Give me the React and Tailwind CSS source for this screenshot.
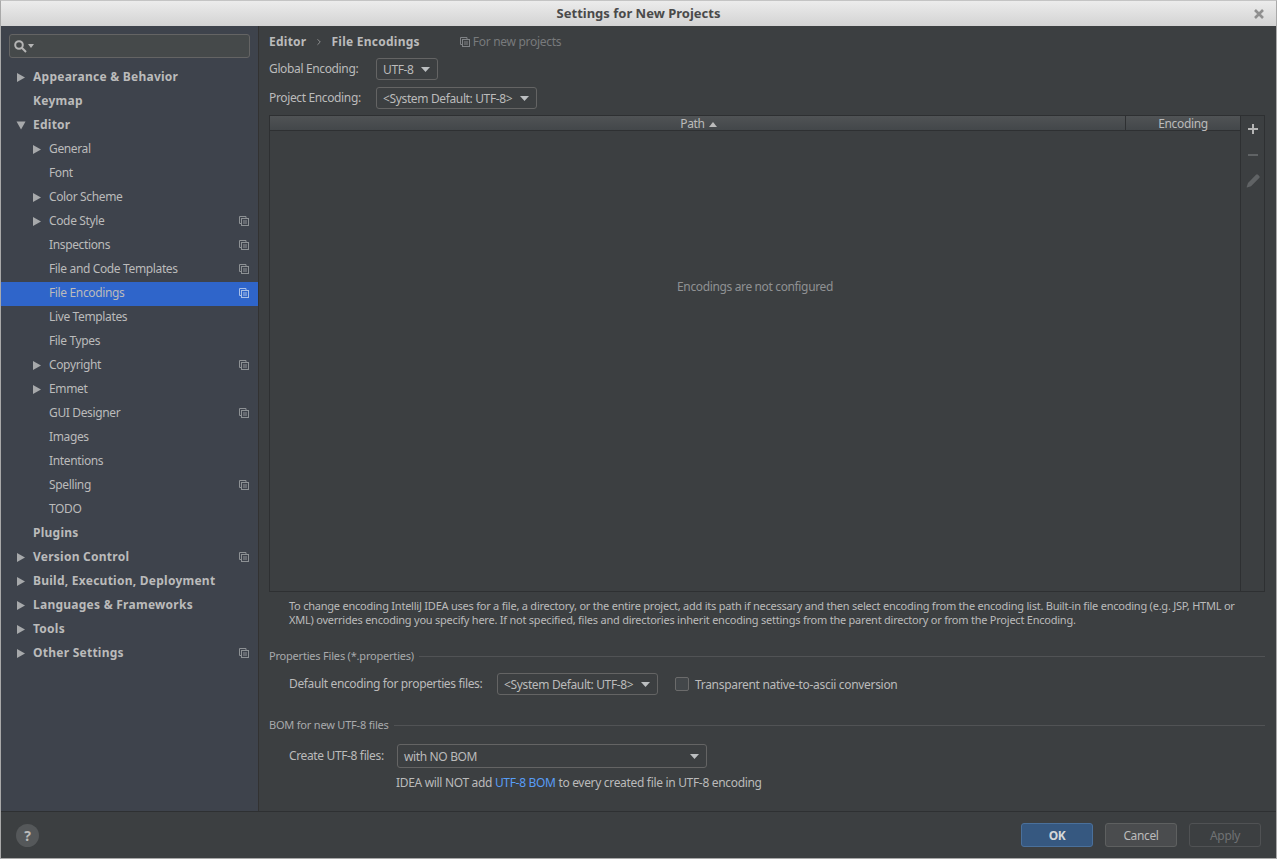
import { ChevronRight } from 'lucide-react';

const treeItems = [
  { label: 'Appearance & Behavior', level: 0, arrow: 'right' },
  { label: 'Keymap', level: 0 },
  { label: 'Editor', level: 0, arrow: 'down' },
  { label: 'General', level: 1, arrow: 'right' },
  { label: 'Font', level: 1 },
  { label: 'Color Scheme', level: 1, arrow: 'right' },
  { label: 'Code Style', level: 1, arrow: 'right', copy: true },
  { label: 'Inspections', level: 1, copy: true },
  { label: 'File and Code Templates', level: 1, copy: true },
  { label: 'File Encodings', level: 1, copy: true, selected: true },
  { label: 'Live Templates', level: 1 },
  { label: 'File Types', level: 1 },
  { label: 'Copyright', level: 1, arrow: 'right', copy: true },
  { label: 'Emmet', level: 1, arrow: 'right' },
  { label: 'GUI Designer', level: 1, copy: true },
  { label: 'Images', level: 1 },
  { label: 'Intentions', level: 1 },
  { label: 'Spelling', level: 1, copy: true },
  { label: 'TODO', level: 1 },
  { label: 'Plugins', level: 0 },
  { label: 'Version Control', level: 0, arrow: 'right', copy: true },
  { label: 'Build, Execution, Deployment', level: 0, arrow: 'right' },
  { label: 'Languages & Frameworks', level: 0, arrow: 'right' },
  { label: 'Tools', level: 0, arrow: 'right' },
  { label: 'Other Settings', level: 0, arrow: 'right', copy: true },
];

const CopyIcon = ({ className = 'text-[#8d9194]' }) => (
  <svg width="10" height="10" viewBox="0 0 10 10" fill="none" stroke="currentColor" className={className}>
    <path d="M2.5 7.5H.5V.5h6.5v2" />
    <rect x="2.5" y="2.5" width="7" height="7" />
    <path d="M4 5h4M4 7h4" />
  </svg>
);

const Arrow = ({ dir }) => (
  <svg width="10" height="11" viewBox="0 0 10 11" className="text-[#a7a9ab]" fill="currentColor">
    {dir === 'right' ? <path d="M1 1l8 4.5L1 10z" /> : <path d="M.5 1.5h9L5 9.5z" />}
  </svg>
);

const Caret = () => (
  <svg width="9" height="5" viewBox="0 0 9 5" className="text-[#bcbfc1] shrink-0" fill="currentColor">
    <path d="M0 0h9L4.5 5z" />
  </svg>
);

const TreeRow = ({ item }) => (
  <div className={`flex items-center h-6 pb-[2px] pr-[9px] ${item.selected ? 'bg-[#2f65ca]' : ''}`}>
    <div className={`flex items-center justify-center w-[10px] shrink-0 mr-[7px] ${item.level === 0 ? 'ml-[15px]' : 'ml-[31px]'}`}>
      {item.arrow && <Arrow dir={item.arrow} />}
    </div>
    <span className={item.level === 0 ? 'font-bold text-[12px] tracking-[0.25px]' : 'text-[12px]'}>
      {item.label}
    </span>
    {item.copy && (
      <span className="ml-auto">
        <CopyIcon className={item.selected ? 'text-[#a9bfe6]' : 'text-[#8d9194]'} />
      </span>
    )}
  </div>
);

const Select = ({ children, className = '' }) => (
  <div className={`flex items-center justify-between whitespace-nowrap rounded-[3px] border border-[#646464] bg-[#3c3f41] pl-[6px] pr-[7px] text-[12px] ${className}`}>
    <span className="pt-px">{children}</span>
    <Caret />
  </div>
);

const GroupTitle = ({ children }) => (
  <div className="flex items-center gap-[5px] text-[11px] leading-4 tracking-[-0.2px] text-[#a8aaac]">
    <span>{children}</span>
    <div className="h-px flex-1 bg-[#515355]" />
  </div>
);

const FooterButton = ({ children, className }) => (
  <div className={`flex h-6 w-[72px] items-center justify-center rounded-[3px] border pt-px text-[12px] ${className}`}>{children}</div>
);

export default function App() {
  return (
    <div className="flex h-[859px] w-[1277px] flex-col overflow-hidden border border-[#a9a9a9] border-t-[#c4c4c4] bg-[#3c3f41] font-['Noto_Sans','Open_Sans',sans-serif] tracking-[-0.36px] text-[#bbbbbb]">
      <div className="relative flex h-[25px] shrink-0 items-center justify-center bg-gradient-to-b from-[#ececec] to-[#d3d3d3]">
        <span className="text-[13px] font-bold tracking-normal text-[#4a4a4a]">Settings for New Projects</span>
        <svg width="10" height="10" viewBox="0 0 10 10" className="absolute right-[12px] top-[8px] text-[#8f8f8f]" stroke="currentColor" strokeWidth="2.6">
          <path d="M1 1l8 8M9 1l-8 8" />
        </svg>
      </div>

      <div className="flex min-h-0 flex-1">
        <aside className="w-[258px] shrink-0 border-r border-[#323232] bg-[#3e434c] pt-2">
          <div className="mx-2 mb-[8px] flex h-6 items-center gap-px rounded-[3px] border border-[#646464] bg-[#45494a] pl-1">
            <svg width="13" height="13" viewBox="0 0 13 13" fill="none" stroke="#b5b5b5" strokeWidth="2">
              <circle cx="5" cy="5" r="3.8" />
              <path d="M7.8 7.8L12 12" />
            </svg>
            <svg width="6" height="4" viewBox="0 0 6 4" className="text-[#b5b5b5]" fill="currentColor"><path d="M0 0h6L3 4z" /></svg>
          </div>
          {treeItems.map((item) => (
            <TreeRow key={item.label} item={item} />
          ))}
        </aside>

        <main className="flex min-w-0 flex-1 flex-col pl-[10px] pr-[11px]">
          <div className="flex h-[32px] shrink-0 items-center text-[12px]">
            <span className="font-bold tracking-[0.25px]">Editor</span>
            <ChevronRight size={10} strokeWidth={1.5} className="ml-[8px] mr-[7px]" />
            <span className="font-bold tracking-[0.25px]">File Encodings</span>
            <CopyIcon className="ml-[40px] text-[#808386]" />
            <span className="ml-[3px] tracking-[-0.3px] text-[#787a7c]">For new projects</span>
          </div>

          <div className="flex h-[22px] items-center text-[12px]">
            <span className="w-[107px]">Global Encoding:</span>
            <Select className="h-[22px] w-[62px]">UTF-8</Select>
          </div>
          <div className="mt-[7px] flex h-[22px] items-center text-[12px]">
            <span className="w-[107px]">Project Encoding:</span>
            <Select className="h-[22px] w-[161px]">{'<System Default: UTF-8>'}</Select>
          </div>

          <div className="mt-[6px] flex h-[477px] shrink-0 border border-[#2e3032]">
            <div className="flex min-w-0 flex-1 flex-col">
              <div className="flex h-[15px] shrink-0 items-center border-b border-[#2e3032] bg-gradient-to-b from-[#505355] to-[#43474a] text-[12px]">
                <div className="flex flex-1 items-center justify-center gap-[4px] pl-[2px] pt-[2px]">
                  Path
                  <svg width="8" height="5" viewBox="0 0 8 5" fill="currentColor"><path d="M4 0l4 5H0z" /></svg>
                </div>
                <div className="h-full w-[115px] border-l border-[#2e3032] text-center leading-[16px]">Encoding</div>
              </div>
              <div className="flex flex-1 justify-center pt-[147px] text-[12px] text-[#8f9193]">Encodings are not configured</div>
            </div>
            <div className="flex w-[24px] shrink-0 flex-col items-center gap-[14px] border-l border-[#2e3032] pt-[7px]">
              <svg width="12" height="12" viewBox="0 0 12 12" fill="#b5b5b5"><path d="M5 1h2v4h4v2H7v4H5V7H1V5h4z" /></svg>
              <svg width="12" height="12" viewBox="0 0 12 12" fill="#606365"><path d="M1 5h10v2H1z" /></svg>
              <svg width="14" height="14" viewBox="0 0 14 14" fill="#606365" className="-mt-px">
                <path d="M10 .8a1.4 1.4 0 0 1 2 0l1.2 1.2a1.4 1.4 0 0 1 0 2L5 12.2 1 13.6l-.4-.4L2 9z" />
              </svg>
            </div>
          </div>

          <p className="ml-5 mt-[7px] w-[965px] text-[11px] leading-[14px] tracking-[-0.23px]">
            To change encoding IntelliJ IDEA uses for a file, a directory, or the entire project, add its path if necessary and then select encoding from the encoding list. Built-in file encoding (e.g. JSP, HTML or XML) overrides encoding you specify here. If not specified, files and directories inherit encoding settings from the parent directory or from the Project Encoding.
          </p>

          <div className="mt-[21px]">
            <GroupTitle>Properties Files (*.properties)</GroupTitle>
          </div>
          <div className="ml-5 mt-[9px] flex h-[22px] items-center text-[12px]">
            <span className="w-[208px]">Default encoding for properties files:</span>
            <Select className="h-[22px] w-[161px]">{'<System Default: UTF-8>'}</Select>
            <div className="ml-[17px] h-[14px] w-[14px] rounded-[2px] border border-[#6b6b6b] bg-[#43474a]" />
            <span className="ml-[6px] pt-px tracking-[-0.31px]">Transparent native-to-ascii conversion</span>
          </div>

          <div className="mt-[22px]">
            <GroupTitle>BOM for new UTF-8 files</GroupTitle>
          </div>
          <div className="ml-5 mt-[11px] flex h-[24px] items-center text-[12px]">
            <span className="w-[108px]">Create UTF-8 files:</span>
            <Select className="h-[24px] w-[310px]">with NO BOM</Select>
          </div>
          <div className="ml-[127px] mt-[7px] text-[12px] leading-4 tracking-[-0.32px]">
            IDEA will NOT add <span className="text-[#589df6]">UTF-8 BOM</span> to every created file in UTF-8 encoding
          </div>
        </main>
      </div>

      <footer className="flex h-[47px] shrink-0 items-center justify-between border-t border-[#2e3032] bg-[#3c3f41] pl-[15px] pr-[15px]">
        <div className="flex h-[23px] w-[23px] items-center justify-center rounded-full bg-[#55585a] text-[14px] font-bold text-[#bbbbbb]">?</div>
        <div className="flex gap-[12px]">
          <FooterButton className="border-[#4a709b] bg-[#365880] font-bold text-[#d4d7d9]">OK</FooterButton>
          <FooterButton className="border-[#5e6060] bg-[#4a4c4e]">Cancel</FooterButton>
          <FooterButton className="border-[#505254] bg-[#3c3f41] text-[#707274]">Apply</FooterButton>
        </div>
      </footer>
    </div>
  );
}
